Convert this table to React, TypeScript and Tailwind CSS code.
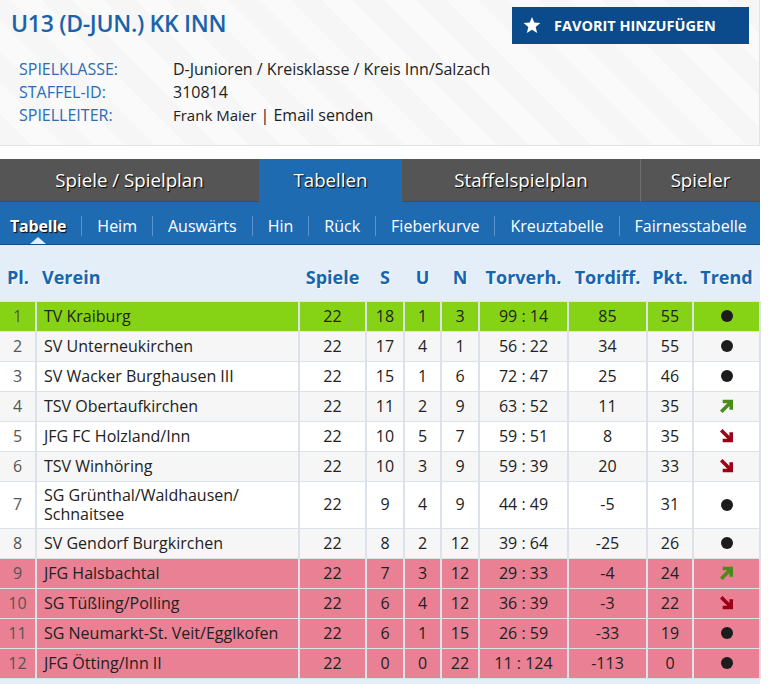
import React from 'react';

type Trend = 'same' | 'up' | 'down';

type Row = {
  pl: number;
  team: string;
  games: number;
  s: number;
  u: number;
  n: number;
  goals: string;
  diff: number;
  pts: number;
  trend: Trend;
};

const rows: Row[] = [
  { pl: 1, team: 'TV Kraiburg', games: 22, s: 18, u: 1, n: 3, goals: '99 : 14', diff: 85, pts: 55, trend: 'same' },
  { pl: 2, team: 'SV Unterneukirchen', games: 22, s: 17, u: 4, n: 1, goals: '56 : 22', diff: 34, pts: 55, trend: 'same' },
  { pl: 3, team: 'SV Wacker Burghausen III', games: 22, s: 15, u: 1, n: 6, goals: '72 : 47', diff: 25, pts: 46, trend: 'same' },
  { pl: 4, team: 'TSV Obertaufkirchen', games: 22, s: 11, u: 2, n: 9, goals: '63 : 52', diff: 11, pts: 35, trend: 'up' },
  { pl: 5, team: 'JFG FC Holzland/Inn', games: 22, s: 10, u: 5, n: 7, goals: '59 : 51', diff: 8, pts: 35, trend: 'down' },
  { pl: 6, team: 'TSV Winhöring', games: 22, s: 10, u: 3, n: 9, goals: '59 : 39', diff: 20, pts: 33, trend: 'down' },
  { pl: 7, team: 'SG Grünthal/Waldhausen/\u200BSchnaitsee', games: 22, s: 9, u: 4, n: 9, goals: '44 : 49', diff: -5, pts: 31, trend: 'same' },
  { pl: 8, team: 'SV Gendorf Burgkirchen', games: 22, s: 8, u: 2, n: 12, goals: '39 : 64', diff: -25, pts: 26, trend: 'same' },
  { pl: 9, team: 'JFG Halsbachtal', games: 22, s: 7, u: 3, n: 12, goals: '29 : 33', diff: -4, pts: 24, trend: 'up' },
  { pl: 10, team: 'SG Tüßling/Polling', games: 22, s: 6, u: 4, n: 12, goals: '36 : 39', diff: -3, pts: 22, trend: 'down' },
  { pl: 11, team: 'SG Neumarkt-St. Veit/Egglkofen', games: 22, s: 6, u: 1, n: 15, goals: '26 : 59', diff: -33, pts: 19, trend: 'same' },
  { pl: 12, team: 'JFG Ötting/Inn II', games: 22, s: 0, u: 0, n: 22, goals: '11 : 124', diff: -113, pts: 0, trend: 'same' },
];

const subnav = ['Tabelle', 'Heim', 'Auswärts', 'Hin', 'Rück', 'Fieberkurve', 'Kreuztabelle', 'Fairnesstabelle'];

function TrendIcon({ trend }: { trend: Trend }) {
  if (trend === 'same') {
    return <span className="block mx-auto w-[12px] h-[12px] rounded-full bg-[#1c1c1c]" />;
  }
  if (trend === 'up') {
    return (
      <svg width="14" height="14" viewBox="0 0 14 14" className="block mx-auto">
        <g stroke="#4b8a1b" strokeWidth="3.6" fill="none" strokeLinecap="square">
          <polyline points="4.5,2.5 11.2,2.5 11.2,9" />
          <line x1="2.5" y1="11.5" x2="10" y2="4" />
        </g>
      </svg>
    );
  }
  return (
    <svg width="14" height="14" viewBox="0 0 14 14" className="block mx-auto">
      <g stroke="#9c0017" strokeWidth="3.6" fill="none" strokeLinecap="square">
        <polyline points="4.5,11.5 11.2,11.5 11.2,5" />
        <line x1="2.5" y1="2.5" x2="10" y2="10" />
      </g>
    </svg>
  );
}

function rowBg(pl: number) {
  if (pl === 1) return 'bg-[#86d316]';
  if (pl >= 9) return 'bg-[#e98093]';
  return pl % 2 === 0 ? 'bg-[#f6f6f6]' : 'bg-white';
}

export default function App() {
  const cell = 'border-x-2 border-y border-[#dbe2ea] h-[30px] py-[4px] leading-[19px] text-center';
  return (
    <div className="w-[760px] font-['Open_Sans',sans-serif] text-[#222]">
      {/* header */}
      <div className="h-[146px] border-r border-b border-[#e3e3e3] bg-[repeating-linear-gradient(45deg,#f6f6f6_0px,#f6f6f6_22px,#fafafa_22px,#fafafa_44px)] px-[11px] pt-[7px] pr-[10px]">
        <div className="flex justify-between items-start">
          <h1 className="text-[23px] leading-[32px] font-semibold tracking-[-0.3px] text-[#1a63ab]">U13 (D-JUN.) KK INN</h1>
          <button className="w-[237px] h-[37px] bg-[#0b4b8b] text-white flex items-center pl-[11px] gap-[13px] text-[14.5px] font-bold">
            <svg width="18" height="17" viewBox="0 0 24 23">
              <path d="M12 0l3.1 7.6 8.2.6-6.3 5.3 2 8L12 17.2 5 21.5l2-8L.7 8.2l8.2-.6z" fill="#fff" />
            </svg>
            FAVORIT HINZUFÜGEN
          </button>
        </div>
        <div className="mt-[14px] pl-[8px] text-[16px] leading-[23px]">
          <div className="flex">
            <span className="w-[154px] text-[#2a6cb6]">SPIELKLASSE:</span>
            <span>D-Junioren / Kreisklasse / Kreis Inn/Salzach</span>
          </div>
          <div className="flex">
            <span className="w-[154px] text-[#2a6cb6]">STAFFEL-ID:</span>
            <span>310814</span>
          </div>
          <div className="flex">
            <span className="w-[154px] text-[#2a6cb6]">SPIELLEITER:</span>
            <span>
              <span className="text-[15px]">Frank Maier</span> | Email senden
            </span>
          </div>
        </div>
      </div>

      {/* tabs */}
      <div className="mt-[13px] flex h-[43px] text-[18.7px] text-white [text-shadow:1px_1px_1px_#000]">
        <div className="w-[259px] bg-[#555] border-b border-[#4a4a4a] flex items-center justify-center">Spiele / Spielplan</div>
        <div className="w-[143px] bg-[#1e6bb1] flex items-center justify-center">Tabellen</div>
        <div className="w-[239px] bg-[#555] border-b border-[#4a4a4a] border-r border-r-[#6e6e6e] flex items-center justify-center">Staffelspielplan</div>
        <div className="flex-1 bg-[#555] border-b border-[#4a4a4a] flex items-center justify-center">Spieler</div>
      </div>

      {/* subnav */}
      <div className="relative h-[43px] bg-[#1e6bb1] border-b border-[#0f4d8c] flex items-center pt-[5px] pl-[10px] text-[16px] text-white">
        {subnav.map((item, i) => (
          <React.Fragment key={item}>
            {i > 0 && <span className="w-px h-[20px] bg-[#5b93cc] mx-[15px]" />}
            <span className={i === 0 ? 'font-bold tracking-[-0.2px] [text-shadow:1px_1px_1px_#000]' : ''}>{item}</span>
          </React.Fragment>
        ))}
        <span className="absolute left-[30px] bottom-0 w-0 h-0 border-l-[8px] border-r-[8px] border-b-[7px] border-l-transparent border-r-transparent border-b-[#e4eef8]" />
      </div>

      {/* table */}
      <div className="bg-[#e4eef8] pb-[8px]">
        <table className="w-[760px] table-fixed border-collapse text-[16px]">
          <colgroup>
            <col className="w-[36px]" />
            <col className="w-[263px]" />
            <col className="w-[67px]" />
            <col className="w-[38px]" />
            <col className="w-[37px]" />
            <col className="w-[38px]" />
            <col className="w-[89px]" />
            <col className="w-[79px]" />
            <col className="w-[46px]" />
            <col className="w-[67px]" />
          </colgroup>
          <thead>
            <tr className="h-[56px] text-[18px] font-bold text-[#1565b0] [text-shadow:1px_1px_0_#fff]">
              <th className="text-center pt-[9px]">Pl.</th>
              <th className="text-left pl-[6px] pt-[9px]">Verein</th>
              <th className="text-center pt-[9px]">Spiele</th>
              <th className="text-center pt-[9px]">S</th>
              <th className="text-center pt-[9px]">U</th>
              <th className="text-center pt-[9px]">N</th>
              <th className="text-center pt-[9px]">Torverh.</th>
              <th className="text-center pt-[9px]">Tordiff.</th>
              <th className="text-center pt-[9px]">Pkt.</th>
              <th className="text-center pt-[9px]">Trend</th>
            </tr>
          </thead>
          <tbody>
            {rows.map((r) => (
              <tr key={r.pl} className={rowBg(r.pl)}>
                <td className={`${cell} border-l-0 text-[#555]`}>{r.pl}</td>
                <td className={`${cell} !text-left pl-[7px]`}>{r.team}</td>
                <td className={cell}>{r.games}</td>
                <td className={cell}>{r.s}</td>
                <td className={cell}>{r.u}</td>
                <td className={cell}>{r.n}</td>
                <td className={cell}>{r.goals}</td>
                <td className={cell}>{r.diff}</td>
                <td className={cell}>{r.pts}</td>
                <td className={cell}>
                  <TrendIcon trend={r.trend} />
                </td>
              </tr>
            ))}
          </tbody>
        </table>
      </div>
    </div>
  );
}
